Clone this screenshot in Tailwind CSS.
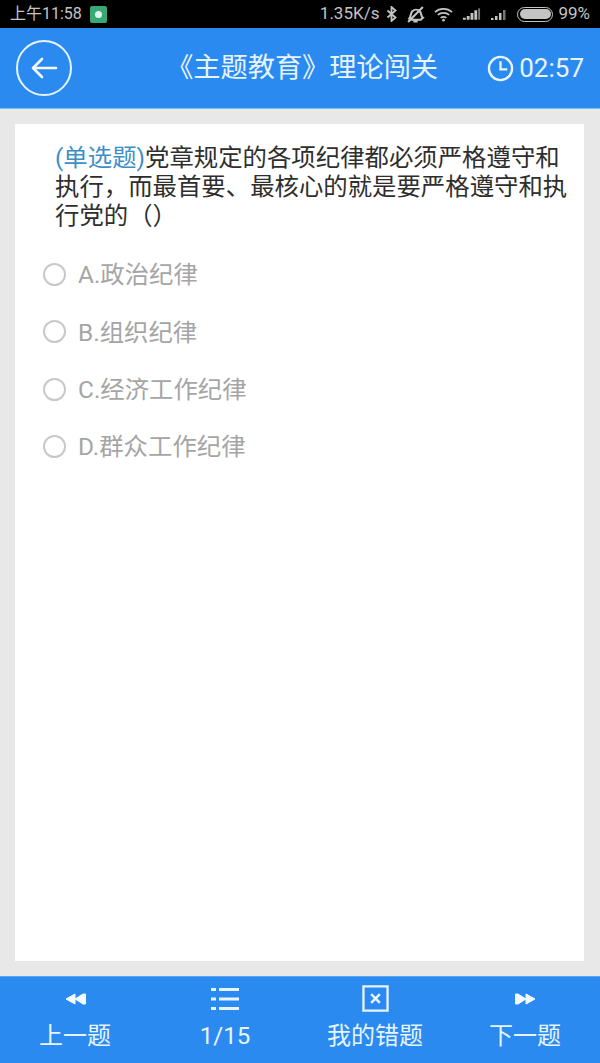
<!doctype html>
<html>
<head>
  <meta charset="UTF-8">
  <meta name="viewport" content="width=device-width, initial-scale=1.0">
  <script src="https://cdn.jsdelivr.net/npm/@tailwindcss/browser@4"></script>
</head>
<body class="w-[600px] h-[1063px] overflow-hidden flex flex-col bg-[#e8e8e8] font-['Roboto','Noto_Sans_CJK_SC',sans-serif]">
  <!-- status bar -->
  <div class="h-[28px] shrink-0 bg-black flex items-center justify-between pl-[10px] pr-[10px] text-[#c4c4c4] text-[16px]">
    <div class="flex items-center gap-[8px]">
      <span>上午11:58</span>
      <div class="w-[17px] h-[17px] rounded-[2px] bg-[#3aa876] flex items-center justify-center">
        <div class="w-[7px] h-[7px] rounded-full bg-[#dff3ea]"></div>
      </div>
    </div>
    <div class="flex items-center gap-[9px]">
      <span class="text-[17px] -mr-[2px]">1.35K/s</span>
      <svg width="11" height="16" viewBox="0 0 10 16" fill="none" stroke="#c4c4c4" stroke-width="1.8"><path d="M1 4.500 9 11.500 5 15V1l4 3.500-8 7"/></svg>
      <svg width="19" height="17" viewBox="0 0 18 16" fill="none" stroke="#c4c4c4" stroke-width="2"><path d="M3 12c2-2 1-5 3-7s5-2 7 0 1 5 3 6l-2 2H4zM7 14.500h4M2 15 16 1"/></svg>
      <svg width="19" height="15" viewBox="0 0 20 15" fill="none" stroke="#c4c4c4" stroke-width="1.800"><path d="M1 5c5-4.500 13-4.500 18 0M4 8c3.500-3 8.500-3 12 0M7 11c2-1.500 4-1.500 6 0"/><circle cx="10" cy="13.500" r="1.400" fill="#c4c4c4" stroke="none"/></svg>
      <svg width="19" height="14" viewBox="0 0 20 14" fill="#c4c4c4"><path d="M1 11h3v2H1zM5 9h3v4H5zM9 6h3v7H9zM13 3h3v10h-3z"/><path d="M17 1h2v12h-2z" opacity=".6"/></svg>
      <svg width="18" height="14" viewBox="0 0 18 14" fill="#c4c4c4"><path d="M1 11h2.500v2H1zM5 9h2.500v4H5zM9 6h2.500v7H9z"/><path d="M13 3h2.500v10H13z" opacity=".6"/></svg>
      <div class="w-[36px] h-[15px] rounded-full border-[1.5px] border-[#c4c4c4] p-[1.5px]">
        <div class="w-full h-full rounded-full bg-[#c4c4c4]"></div>
      </div>
      <span class="-ml-[4px] text-[17px]">99%</span>
    </div>
  </div>

  <!-- header -->
  <div class="h-[81px] shrink-0 bg-[#2b8af0] border-b border-[#7fbdf6] flex items-center justify-between pl-[16px] pr-[16px] text-[#e6f4fd]">
    <div class="w-[56px] h-[56px] rounded-full border-[2px] border-[#e6f4fd] flex items-center justify-center">
      <svg width="28" height="24" viewBox="0 0 28 24" fill="none" stroke="#f4fbff" stroke-width="2.600" stroke-linecap="round" stroke-linejoin="round"><path d="M26 12H3M12 3l-9 9 9 9"/></svg>
    </div>
    <div class="flex-1 text-center text-[27.200px] pl-[45px] whitespace-nowrap">《主题教育》理论闯关</div>
    <div class="flex items-center gap-[5px] text-[26px]">
      <svg width="27" height="27" viewBox="0 0 28 28" fill="none" stroke="#e6f4fd" stroke-width="2.400"><circle cx="14" cy="14" r="12"/><path d="M14 6.500V15h7"/></svg>
      <span>02:57</span>
    </div>
  </div>

  <!-- question -->
  <div class="flex-1 min-h-0 pt-[15px] pb-[15px] pl-[15px] pr-[16px]">
    <div class="h-full bg-white pt-[19px]">
      <p class="pl-[40px] pr-[10px] text-[24.400px] leading-[29px] text-[#2e2e2e]"><span class="text-[#3d8fc8]">(单选题)</span>党章规定的各项纪律都必须严格遵守和执行，而最首要、最核心的就是要严格遵守和执行党的（）</p>
      <div class="mt-[17px] flex flex-col pl-[28px] text-[24.400px] text-[#a5a5a5]">
        <div class="h-[57.300px] flex items-center gap-[12px]"><div class="w-[23px] h-[23px] mb-[2px] rounded-full border-[2px] border-[#c8c8c8]"></div><span>A.政治纪律</span></div>
        <div class="h-[57.300px] flex items-center gap-[12px]"><div class="w-[23px] h-[23px] mb-[2px] rounded-full border-[2px] border-[#c8c8c8]"></div><span>B.组织纪律</span></div>
        <div class="h-[57.300px] flex items-center gap-[12px]"><div class="w-[23px] h-[23px] mb-[2px] rounded-full border-[2px] border-[#c8c8c8]"></div><span>C.经济工作纪律</span></div>
        <div class="h-[57.300px] flex items-center gap-[12px]"><div class="w-[23px] h-[23px] mb-[2px] rounded-full border-[2px] border-[#c8c8c8]"></div><span>D.群众工作纪律</span></div>
      </div>
    </div>
  </div>

  <!-- bottom bar -->
  <div class="h-[87px] shrink-0 bg-[#2b8af0] border-t border-[#5aa6f3] grid grid-cols-4 text-[#e6f4fd] text-[24px]">
    <div class="flex flex-col items-center">
      <div class="h-[44px] flex items-center justify-center">
        <svg width="21" height="14" viewBox="0 0 21 14" fill="#f4fbff" stroke="#f4fbff" stroke-linejoin="round"><path d="M1 7 10 2v10zM10 7l8-5h2.500v10H18z"/></svg>
      </div>
      <span class="leading-[30px]">上一题</span>
    </div>
    <div class="flex flex-col items-center">
      <div class="h-[44px] flex items-center justify-center">
        <svg width="28" height="24" viewBox="0 0 28 24" fill="#e6f4fd"><path d="M0 1h5v3H0zM8 1h20v3H8zM0 10.500h5v3H0zM8 10.500h20v3H8zM0 20h5v3H0zM8 20h20v3H8z"/></svg>
      </div>
      <span class="leading-[30px]">1/15</span>
    </div>
    <div class="flex flex-col items-center">
      <div class="h-[44px] flex items-center justify-center pb-[2px]">
        <svg width="27" height="27" viewBox="0 0 28 28" fill="none" stroke="#e6f4fd" stroke-width="2.400"><path d="M1.500 1.500h25v25h-25z"/><path d="M9.500 9.500l9 9M18.500 9.500l-9 9" stroke-width="2.600"/></svg>
      </div>
      <span class="leading-[30px]">我的错题</span>
    </div>
    <div class="flex flex-col items-center">
      <div class="h-[44px] flex items-center justify-center">
        <svg width="21" height="14" viewBox="0 0 21 14" fill="#f4fbff" stroke="#f4fbff" stroke-linejoin="round"><path d="M20 7 11 2v10zM11 7 3 2H.5v10H3z"/></svg>
      </div>
      <span class="leading-[30px]">下一题</span>
    </div>
  </div>
</body>
</html>
